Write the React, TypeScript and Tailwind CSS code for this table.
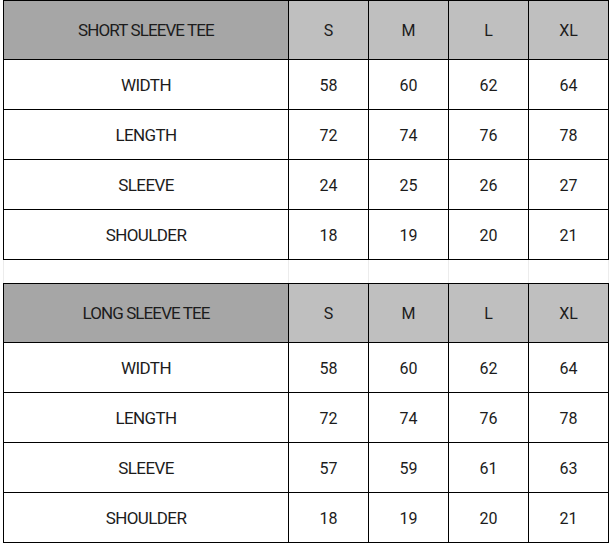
import React from "react";

const sizes = ["S", "M", "L", "XL"];

type Row = { label: string; values: number[] };

const tables: { title: string; rows: Row[] }[] = [
  {
    title: "SHORT SLEEVE TEE",
    rows: [
      { label: "WIDTH", values: [58, 60, 62, 64] },
      { label: "LENGTH", values: [72, 74, 76, 78] },
      { label: "SLEEVE", values: [24, 25, 26, 27] },
      { label: "SHOULDER", values: [18, 19, 20, 21] },
    ],
  },
  {
    title: "LONG SLEEVE TEE",
    rows: [
      { label: "WIDTH", values: [58, 60, 62, 64] },
      { label: "LENGTH", values: [72, 74, 76, 78] },
      { label: "SLEEVE", values: [57, 59, 61, 63] },
      { label: "SHOULDER", values: [18, 19, 20, 21] },
    ],
  },
];

function SizeTable({ title, rows }: { title: string; rows: Row[] }) {
  return (
    <div className="ml-[3px] w-[606px] border-l border-t border-black grid grid-cols-[285px_80px_80px_80px_80px]">
      <div className="h-[59px] pt-[2px] box-border border-r border-b border-black bg-[#a6a6a6] flex items-center justify-center text-[17px] tracking-[-0.9px]">
        {title}
      </div>
      {sizes.map((s) => (
        <div
          key={s}
          className="h-[59px] pt-[2px] box-border border-r border-b border-black bg-[#bfbfbf] flex items-center justify-center"
        >
          {s}
        </div>
      ))}
      {rows.map((r) => (
        <React.Fragment key={r.label}>
          <div className="h-[50px] pt-[2px] box-border border-r border-b border-black bg-white flex items-center justify-center text-[17px] tracking-[-0.6px]">
            {r.label}
          </div>
          {r.values.map((v, i) => (
            <div
              key={i}
              className="h-[50px] pt-[2px] box-border border-r border-b border-black bg-white flex items-center justify-center"
            >
              {v}
            </div>
          ))}
        </React.Fragment>
      ))}
    </div>
  );
}

export default function App() {
  return (
    <div className="w-[612px] h-[547px] bg-white text-[#1c1c1c] text-[16px] font-['Roboto',sans-serif] overflow-hidden">
      <SizeTable {...tables[0]} />
      <div className="h-[23px] ml-[3px] w-[606px] grid grid-cols-[285px_80px_80px_80px_80px] border-l border-[#ececec]">
        {[0, 1, 2, 3, 4].map((i) => (
          <div key={i} className="border-r border-[#ececec]" />
        ))}
      </div>
      <SizeTable {...tables[1]} />
    </div>
  );
}
